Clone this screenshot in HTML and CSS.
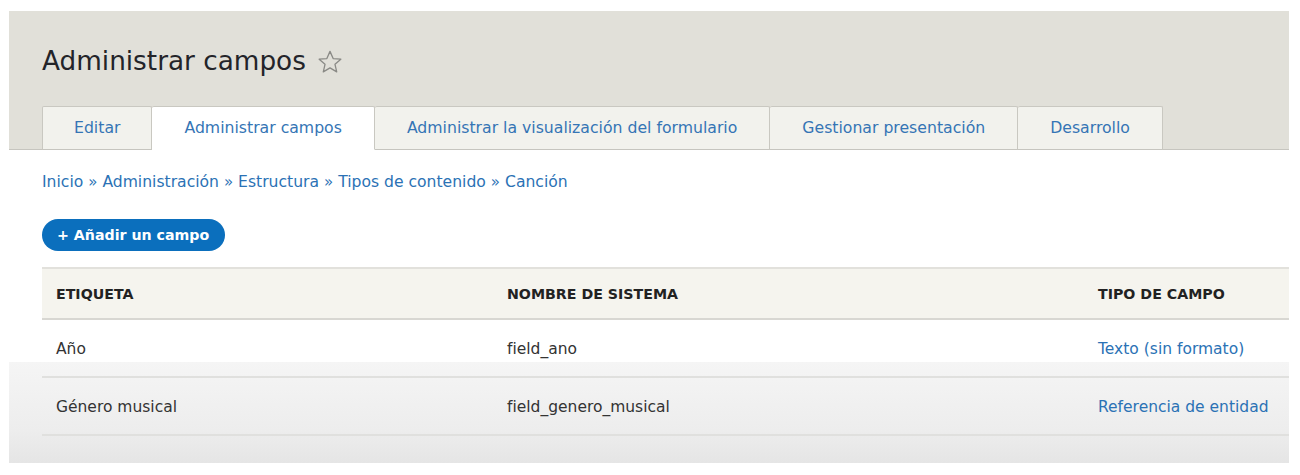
FILE: index.html
```html
<!DOCTYPE html>
<html lang="es">
<head>
<meta charset="utf-8">
<title>Administrar campos</title>
<link rel="stylesheet" href="styles.css">
</head>
<body>
<div class="frame">
  <header class="page-header">
    <h1 class="page-title">Administrar campos
      <svg class="star" viewBox="0 0 24 24" width="26" height="26" aria-hidden="true"><path d="M12 2.2l2.9 6.6 7.1.6-5.4 4.7 1.6 7-6.2-3.7-6.2 3.7 1.6-7L2 9.4l7.1-.6z" fill="none" stroke="#8a8a86" stroke-width="1.2" stroke-linejoin="round"/></svg>
    </h1>
    <nav class="tabs">
      <a class="tab">Editar</a>
      <a class="tab active">Administrar campos</a>
      <a class="tab">Administrar la visualización del formulario</a>
      <a class="tab">Gestionar presentación</a>
      <a class="tab">Desarrollo</a>
    </nav>
  </header>
  <main class="content">
    <div class="breadcrumb">
      <a>Inicio</a> <span class="sep">»</span> <a>Administración</a> <span class="sep">»</span> <a>Estructura</a> <span class="sep">»</span> <a>Tipos de contenido</a> <span class="sep">»</span> <a>Canción</a>
    </div>
    <div class="actions"><a class="button">+ Añadir un campo</a></div>
    <table class="fields">
      <colgroup><col class="c1"><col class="c2"><col class="c3"></colgroup>
      <thead>
        <tr><th>Etiqueta</th><th>Nombre de sistema</th><th>Tipo de campo</th></tr>
      </thead>
      <tbody>
        <tr><td>Año</td><td>field_ano</td><td><a>Texto (sin formato)</a></td></tr>
        <tr><td>Género musical</td><td>field_genero_musical</td><td><a>Referencia de entidad</a></td></tr>
      </tbody>
    </table>
  </main>
</div>
</body>
</html>
```

FILE: styles.css
```css
html, body {
  margin: 0;
  background: #fff;
}
body {
  padding: 11px 0 0 9px;
  font-family: "DejaVu Sans", Verdana, sans-serif;
  color: #333;
}
a { color: #2b72b5; text-decoration: none; }

.frame {
  width: 1280px;
  height: 452px;
  display: flex;
  flex-direction: column;
  background: linear-gradient(to bottom, #fff 0, #fff 351px, #f5f5f5 351px, #ededed 420px, #e5e5e5 452px);
}

.page-header {
  background: #e1e0d9;
  padding: 34px 0 0 33px;
  border-bottom: 1px solid #c6c5bf;
}
.page-title {
  margin: 0;
  height: 32px;
  font-size: 26.3px;
  line-height: 32px;
  font-weight: normal;
  color: #232429;
  display: flex;
  align-items: center;
  gap: 11px;
}
.star { margin-top: 1px; }

.tabs {
  display: flex;
  margin-top: 29px;
  margin-bottom: -1px;
}
.tab {
  height: 42px;
  line-height: 42px;
  padding: 0 32px;
  font-size: 15.7px;
  color: #3575b5;
  background: #f2f2ed;
  border: 1px solid #c9c8c1;
  border-bottom-color: #c6c5bf;
  border-left-width: 0;
  border-radius: 2px 2px 0 0;
}
.tab:first-child { border-left-width: 1px; padding: 0 31px; }
.tab.active {
  background: #fff;
  border-bottom-color: #fff;
}

.content {
  flex: 1;
  padding: 0 0 0 33px;
}
.breadcrumb {
  margin-top: 22px;
  height: 20px;
  font-size: 15.6px;
  line-height: 20px;
  color: #2b72b5;
}
.breadcrumb .sep { font-size: 15px; line-height: 20px; color: #2b72b5; }

.actions { margin-top: 27px; }
.button {
  display: inline-block;
  height: 32px;
  line-height: 32px;
  padding: 0 16px 0 15px;
  border-radius: 16px;
  background: #0b6fbd;
  color: #fff;
  font-weight: bold;
  font-size: 14.2px;
}

.fields {
  margin-top: 16px;
  width: 1247px;
  border-collapse: collapse;
  table-layout: fixed;
}
.c1 { width: 451px; }
.c2 { width: 591px; }
.c3 { width: 205px; }
.fields th {
  text-align: left;
  background: #f5f4ee;
  border-top: 2px solid #e2e1dc;
  border-bottom: 2px solid #d8d7d2;
  height: 49px;
  padding: 0 14px;
  font-size: 14.2px;
  font-weight: bold;
  text-transform: uppercase;
  color: #222;
}
.fields td {
  height: 54px;
  padding: 2px 14px 0;
  font-size: 15.5px;
  border-bottom: 2px solid #e0e0de;
  color: #333;
  white-space: nowrap;
}
```
